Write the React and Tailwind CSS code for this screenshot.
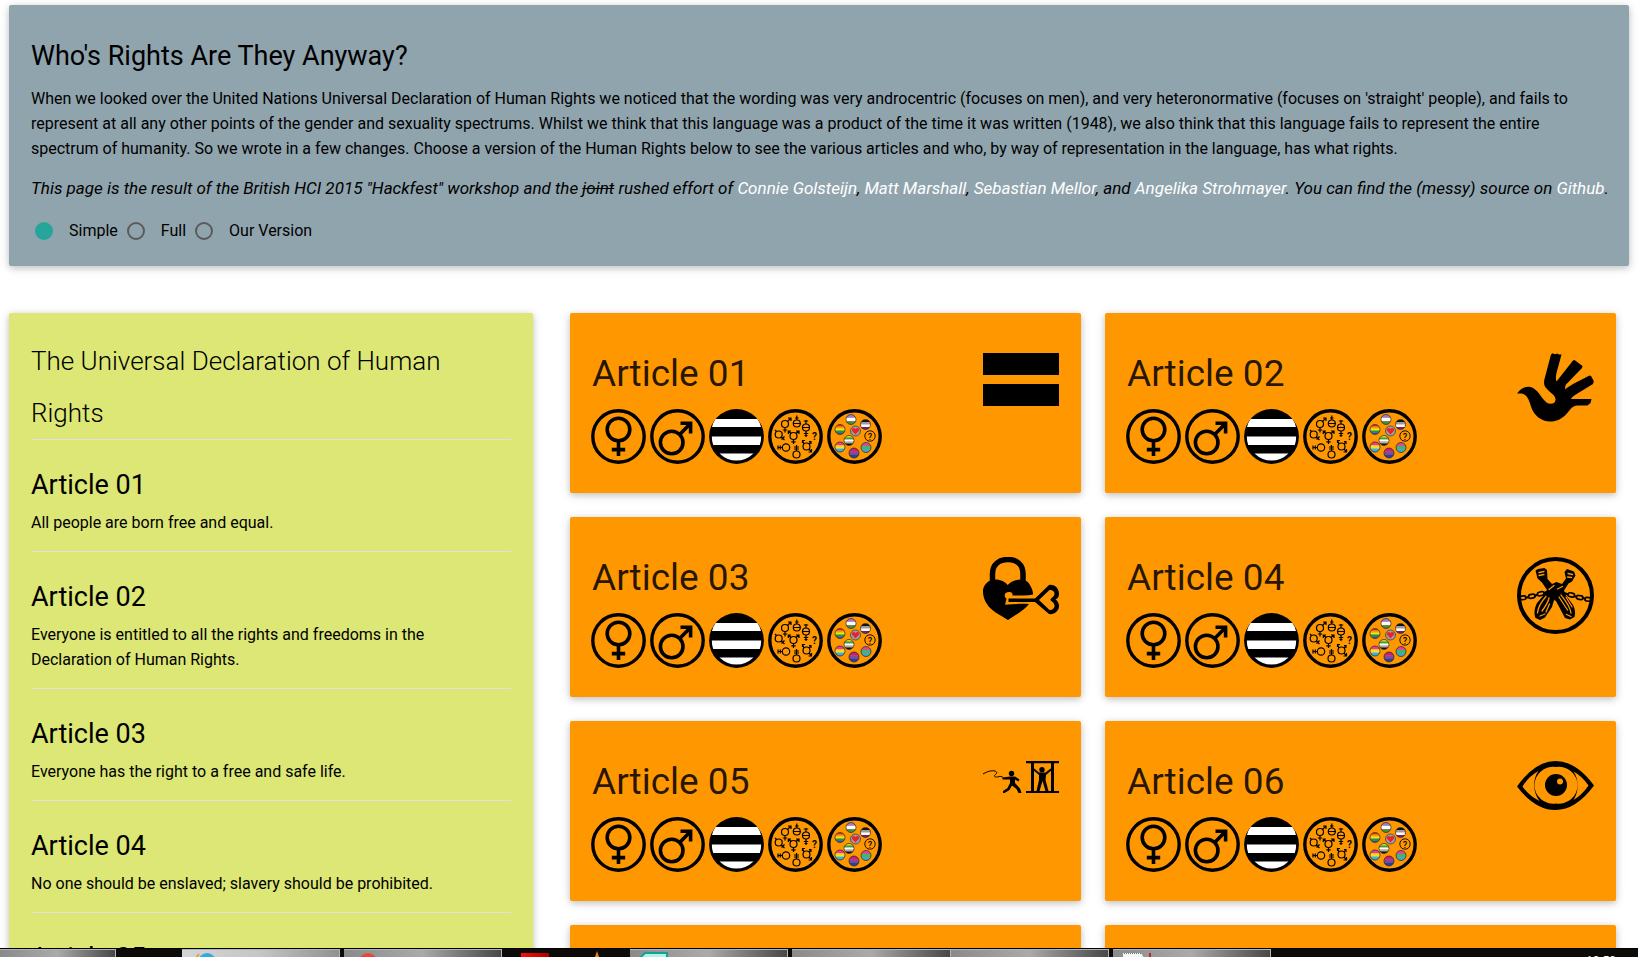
const articles = [
  { title: 'Article 01', text: 'All people are born free and equal.' },
  { title: 'Article 02', text: 'Everyone is entitled to all the rights and freedoms in the Declaration of Human Rights.' },
  { title: 'Article 03', text: 'Everyone has the right to a free and safe life.' },
  { title: 'Article 04', text: 'No one should be enslaved; slavery should be prohibited.' },
  { title: 'Article 05' },
];

const SHADOW = 'shadow-[0_2px_6px_0_rgba(0,0,0,0.16),0_2px_11px_0_rgba(0,0,0,0.12)]';

/* ---------- badges ---------- */

function Ring() {
  return <circle cx="27.5" cy="27.5" r="25.7" fill="none" stroke="#000" strokeWidth="3.4" />;
}

function Badge({ label, children }) {
  return (
    <svg role="img" aria-label={label} viewBox="0 0 55 55" className="size-[55px] shrink-0">
      {children}
    </svg>
  );
}

function Female() {
  return (
    <Badge label="Female">
      <Ring />
      <g fill="none" stroke="#000" strokeWidth="3.6">
        <circle cx="27.5" cy="20.5" r="11.3" />
        <path d="M27.5 32V47M20.8 40.6H34.2" />
      </g>
    </Badge>
  );
}

function Male() {
  return (
    <Badge label="Male">
      <Ring />
      <g fill="none" stroke="#000" strokeWidth="3.6">
        <circle cx="21.7" cy="33.5" r="11.3" />
        <path d="M29.7 25.5L40 15M30.5 14.2H40.6V24.5" />
      </g>
    </Badge>
  );
}

function Straight() {
  return (
    <Badge label="Straight">
      <circle cx="27.5" cy="27.5" r="27.4" fill="#000" />
      <path
        fill="#fff"
        d="M6.6 10H48.4Q51 13.5 52 18H3Q4 13.5 6.6 10ZM2.8 27.5H52.2Q52.200 32 50.800 36H4.200Q2.800 32 2.800 27.500ZM10.500 44.500H44.500Q37 51.600 27.500 51.600T10.500 44.500Z"
      />
    </Badge>
  );
}

function Genders() {
  return (
    <Badge label="Gender spectrum">
      <Ring />
      <g fill="none" stroke="#000" strokeWidth="1.2">
        <circle cx="17" cy="15" r="3.500" />
        <path d="M17 18.500V23.500M14.800 21H19.200M19.500 12.500L23 9M20 9H23V12" />
        <circle cx="28.800" cy="14.500" r="3.500" />
        <path d="M28.800 6.500V11M25 14.500H32.600M27 9H30.600" />
        <circle cx="38" cy="18.500" r="3.500" />
        <path d="M38 11V15M35.800 12H40.200M34.500 18.500H41.500M38 22V28M35.800 24.500H40.200M36.500 26.500H39.500" />
        <circle cx="10.700" cy="25.500" r="3.500" />
        <path d="M13.300 28L16.500 31M16.500 27.500L13.500 30.500M7 21L8.500 22.500" />
        <circle cx="25.500" cy="27" r="3.500" />
        <path d="M25.500 30.500V35M23.300 32.800H27.700M23 24.500L20.300 22M20.300 25V22H23M28 24.500L31 22M28 22H31V25" />
        <circle cx="18" cy="38.500" r="3.700" />
        <path d="M14.300 38.500H10M12.300 36.500V40.500M10 36.500V40.500" />
        <circle cx="28.500" cy="45.500" r="3.500" />
        <path d="M28.500 42V36M26 38H31M26 40H31" />
        <circle cx="38.500" cy="37.500" r="3.500" />
        <path d="M36 35L34.500 31.500M34.500 34V31.500H37M41 35L43 32.500M41 32.500H43V35M41 40L43.500 43M43.500 40V43H40.500" />
      </g>
      <text x="46.500" y="31" textAnchor="middle" className="font-[Roboto,sans-serif] text-[10px] font-bold">
        ?
      </text>
    </Badge>
  );
}

const flags = [
  { x: 24, y: 10.5, colors: ['#a77ac0', '#ffffff', '#4c8a3f'] },
  { x: 38.5, y: 15.5, colors: ['#111111', '#9c9c9c', '#ffffff', '#7d1880'] },
  { x: 13, y: 20.5, colors: ['#e22c1c', '#f59a12', '#f3e51d', '#1d9a3d', '#2f55b5'] },
  { x: 22, y: 31.5, colors: ['#e9dc29', '#35a24a', '#ffffff', '#aaaaaa', '#111111'] },
  { x: 13, y: 38, colors: ['#f4389a', '#f7df1f', '#2fb1f2'] },
  { x: 39, y: 38.5, colors: ['#e4429c', '#43b56c', '#3aa9d0'] },
  { x: 27, y: 44, colors: ['#d11b78', '#8a4797', '#2540a8'] },
];

function Sexualities() {
  return (
    <Badge label="Sexuality spectrum">
      <Ring />
      {flags.map((f, i) => {
        const h = 10 / f.colors.length;
        return (
          <g key={i}>
            <clipPath id={`flag-${i}`}>
              <circle cx={f.x} cy={f.y} r="5" />
            </clipPath>
            <g clipPath={`url(#flag-${i})`}>
              {f.colors.map((c, j) => (
                <rect key={j} x={f.x - 5} y={f.y - 5 + j * h} width="10" height={h + 0.2} fill={c} />
              ))}
            </g>
            <circle cx={f.x} cy={f.y} r="5" fill="none" stroke="#222" strokeWidth="0.7" />
          </g>
        );
      })}
      <circle cx="28.500" cy="22" r="5" fill="#9aa0a6" stroke="#333" strokeWidth="0.7" />
      <path d="M28.500 25.500L25 21.800Q24.500 19 26.800 19Q28 19 28.500 20.200Q29 19 30.300 19Q32.600 19 32 21.800Z" fill="#f0202a" />
      <circle cx="43" cy="27" r="5.200" fill="none" stroke="#000" strokeWidth="0.9" />
      <text x="43" y="30.500" textAnchor="middle" className="font-[Roboto,sans-serif] text-[9px] font-medium">
        ?
      </text>
    </Badge>
  );
}

/* ---------- article pictures ---------- */

function Picture({ label, viewBox, children }) {
  return (
    <svg role="img" aria-label={label} viewBox={viewBox} className="mt-[18px] w-[77px] shrink-0 self-start">
      {children}
    </svg>
  );
}

function Equal() {
  return (
    <Picture label="Equality" viewBox="0 0 77 53">
      <path d="M1 0H77V22H1ZM1 31H77V53H1Z" />
    </Picture>
  );
}

function Hand() {
  return (
    <Picture label="Hand" viewBox="0 0 77 69">
      <path d="M0 40.500C4 35 9 33 13.500 34C21 36 24 45 29.500 49.500C33 52 38 51 38.500 47C39 42 33 40 30 36C27 33 26.500 30 27.500 26L34 1.500L35.500 .3L38 1.200L40 .5L42 1.500L44.500 1.500L39.500 20C38.800 23 38.500 26 39.500 28.500L56 7.500L57.500 7L65.500 13L65 15L50.500 30C48 32 48 34 48.300 36.500C50 34.500 53 33 56 31L72.500 22.500L74 23L76.800 28L76 31L58 42C56 43.300 54.500 44.500 54 46H74.500L73.500 50L70.500 52.500H60C54 53 53 58 48 62.500C43 67 38 68.500 33.500 68.500C24 68.500 17 62 14.500 55C12 47 10.500 42 5 40.500Z" />
    </Picture>
  );
}

function Lock() {
  return (
    <Picture label="Lock and key" viewBox="-1 0 77 63">
      <path d="M9.500 25V17C9.500 7 16.500 2.500 24.800 2.500S40 7 40 17V25" fill="none" stroke="#000" strokeWidth="5.500" />
      <path d="M24.800 28C27 25 32 22.500 38 22.500C44 23 46 26 47.500 29C49 32 50 34 50 37.500Q46 38.500 40 38.500H29.500C30 36 28.500 34.800 26 35C22.500 35 21 37 22 40L23.500 42L22 47.800C30 47 38 46.500 46 47C42 53 32 58 25 63C16 57 8 54 4 47C.5 42 0 37 0 33.500C.5 28 5 23 11 22.500C17 22 22 24.500 24.800 28Z" />
      <path d="M25.500 41.500H52L66 28C70 27 76 30 76 37Q76 41 72.500 42.500Q76 45 76 49C76 54 71 58 66 57L52 45H25.500ZM56 43L66.500 53C69 53.500 72 51 71.500 48.500C71.500 45 67 44 67.500 42.500C67.500 41 71.500 40 71.500 36.500C71.500 34 68.500 32.500 66.500 33Z" fillRule="evenodd" />
    </Picture>
  );
}

function Chained() {
  return (
    <Picture label="Chained hands" viewBox="0 0 77 77">
      <circle cx="38.500" cy="38.500" r="36.500" fill="none" stroke="#000" strokeWidth="4" />
      <g fill="none" stroke="#000" strokeWidth="1.600">
        <rect x="3" y="39" width="6" height="3.600" rx="1.800" transform="rotate(-6 6 41)" />
        <rect x="11.500" y="37.500" width="6.500" height="3.800" rx="1.900" transform="rotate(-10 14 39)" />
        <rect x="20.500" y="35" width="6.500" height="3.800" rx="1.900" transform="rotate(-12 23 37)" />
        <rect x="51" y="36" width="6.500" height="3.800" rx="1.900" transform="rotate(12 54 38)" />
        <rect x="59.500" y="38.500" width="6.500" height="3.800" rx="1.900" transform="rotate(10 62 40)" />
        <rect x="68" y="40.500" width="6" height="3.600" rx="1.800" transform="rotate(6 71 42)" />
        <path d="M8 41L12 40M17.500 39L21 37.500M26.500 36L31 34.500M47 36L51.500 37.500M57 39L60 40M65.500 41L69 42" strokeWidth="2.200" />
      </g>
      <path d="M18.500 13.500L21 12L27.500 11L30 13L30.500 22L35 27L39.500 25L45 27L49 21.500L47.500 15L50 12L57 14.500L58.500 18.500L55 24.500L51.500 26.500L47 33.500L49.500 39L56 48C58.500 53 58.500 57 57.500 60L53 62.500L48 61L39 44L37 43L35 50L28 60.500L23 63L18.500 61C17 57 17 52 20 46L26.500 38.500L30 33L25 25.500L20.500 21.500Z" />
      <g fill="none" stroke="#ff9800" strokeWidth="1.300" strokeLinecap="round">
        <path d="M20.500 56C21 50 24 45 29 39.500M23 59L28 57M25 54C28 50 31 46 32 41M32.500 47L29 55M54 56C53 49 48 43 44 38M54 59.500L49.500 57.500M50.500 53L42 40M55 50L49 40M22 15.500L27 14.500M22 18.500L27 17.500M51 16.500L55.500 17.500M50.500 20L54.500 20.500M32 32.500L37 28.500M45.500 29.500L40.500 32" />
      </g>
    </Picture>
  );
}

function Torture() {
  return (
    <Picture label="Torture" viewBox="-1 0 77 32">
      <path d="M0 13C5 10 11 8.500 13.500 11C15 13 9 14.500 12.500 16C15 16.500 17 14 20 16.500" fill="none" stroke="#000" strokeWidth="1" />
      <circle cx="28.500" cy="12.500" r="2.700" />
      <path d="M27 15.500L32 15.500L36.500 18.500L35.500 20.500L32 18.500L32 22L37 27.500L38.500 32H35.500L33.500 28L29 24.500L26.500 29L21.500 32H20L20 30L24.500 27L27 22V18.500L19.500 18.500V16.500Z" />
      <path d="M43 0H76V2.200H43ZM43 30H76V32H43ZM48 2H51V30H48ZM68 2H71V30H68Z" />
      <circle cx="59" cy="8.700" r="2.700" />
      <path d="M50 6.500L56 11.500H62.500L69 6.500L70 8L63 14L62.500 19L65.500 30H62.500L59.500 20L56.500 30H53.500L56 19V14L49 8Z" />
    </Picture>
  );
}

function Eye() {
  return (
    <Picture label="Eye" viewBox="0 0 77 49">
      <path
        fillRule="evenodd"
        d="M0 25.500Q18 0 38.500 0T77 24.500Q59 49 38.500 49T0 25.500ZM5.500 25.500Q12 35 22.500 40C15.500 31 15.500 18 21.500 10Q12 15 5.500 25.500ZM71.500 24.500Q65 15 56.500 10.500C62 18 62 31 56.500 39Q65 34 71.500 24.500ZM39 6A18.500 18.500 0 1 0 39 42.500A18.500 18.500 0 1 0 39 6Z"
      />
      <circle cx="39" cy="24" r="11" />
      <circle cx="43" cy="20.500" r="3" fill="#ff9800" />
    </Picture>
  );
}

const cards = [
  { title: 'Article 01', Icon: Equal },
  { title: 'Article 02', Icon: Hand },
  { title: 'Article 03', Icon: Lock },
  { title: 'Article 04', Icon: Chained },
  { title: 'Article 05', Icon: Torture },
  { title: 'Article 06', Icon: Eye },
];

const CARD = `flex h-[180px] justify-between rounded-[2px] bg-[#ff9800] px-[22px] pt-[22px] ${SHADOW}`;

function Card({ title, Icon }) {
  return (
    <article className={CARD}>
      <div className="flex flex-col">
        <h2 className="mt-4 text-[37px] leading-[46px] text-black/85">{title}</h2>
        <div className="mt-3 -ml-px flex gap-1">
          <Female />
          <Male />
          <Straight />
          <Genders />
          <Sexualities />
        </div>
      </div>
      <Icon />
    </article>
  );
}

/* ---------- header ---------- */

function Radio({ label, checked }) {
  return (
    <label className="mr-[6px] flex items-center">
      <input
        type="radio"
        name="version"
        defaultChecked={checked}
        className="mr-4 ml-[3px] size-[18px] appearance-none rounded-full border-2 border-[#5a5a5a] checked:border-[#26a69a] checked:bg-[#26a69a]"
      />
      {label}
    </label>
  );
}

function Person({ children }) {
  return (
    <a href="#" className="text-white">
      {children}
    </a>
  );
}

function Header() {
  return (
    <header className={`rounded-[2px] bg-[#90a4ae] px-[22px] pt-[35px] pb-[23px] ${SHADOW}`}>
      <h1 className="text-[27px] leading-8">Who's Rights Are They Anyway?</h1>
      <p className="mt-[14px]">
        When we looked over the United Nations Universal Declaration of Human Rights we noticed that the wording was very
        androcentric (focuses on men), and very heteronormative (focuses on 'straight' people), and fails to represent at
        all any other points of the gender and sexuality spectrums. Whilst we think that this language was a product of
        the time it was written (1948), we also think that this language fails to represent the entire spectrum of
        humanity. So we wrote in a few changes. Choose a version of the Human Rights below to see the various articles
        and who, by way of representation in the language, has what rights.
      </p>
      <p className="mt-[15px] text-[17px] italic 2xl:whitespace-nowrap">
        This page is the result of the British HCI 2015 "Hackfest" workshop and the <s>joint</s> rushed effort of{' '}
        <Person>Connie Golsteijn</Person>, <Person>Matt Marshall</Person>, <Person>Sebastian Mellor</Person>, and{' '}
        <Person>Angelika Strohmayer</Person>. You can find the (messy) source on <Person>Github</Person>.
      </p>
      <form className="mt-[17px] ml-px flex">
        <Radio label="Simple" checked />
        <Radio label="Full" />
        <Radio label="Our Version" />
      </form>
    </header>
  );
}

/* ---------- taskbar ---------- */

function Task({ className, children }) {
  return (
    <div
      className={`h-full shrink-0 border-t border-r border-[#b5b5b5] bg-linear-to-r from-[#8a8a8a] via-[#aaaaaa] to-[#484848] ${className}`}
    >
      {children}
    </div>
  );
}

function Taskbar() {
  return (
    <footer className="flex h-[9px] shrink-0 overflow-hidden border-t border-black bg-[#0d0b08]">
      <Task className="w-[116px]" />
      <Task className="ml-[66px] w-[158px] from-[#d5d5d5] via-[#c5c5c5] to-[#909090]">
        <svg viewBox="0 0 24 8" className="ml-3 h-2 w-6">
          <circle cx="13" cy="12" r="9" fill="#35a8e0" />
          <path d="M2 8L5 4" stroke="#e8a33a" strokeWidth="2" />
        </svg>
      </Task>
      <Task className="ml-1 w-[158px]">
        <svg viewBox="0 0 24 8" className="ml-3 h-2 w-6">
          <circle cx="12" cy="12" r="9" fill="#e2493b" />
        </svg>
      </Task>
      <div className="mt-1 ml-[19px] h-2 w-7 shrink-0 bg-linear-to-r from-[#ff0d0d] to-[#b00000]" />
      <svg viewBox="0 0 8 8" className="ml-11 h-2 w-2 shrink-0">
        <path d="M4 2L6 8H2Z" fill="#f58210" />
      </svg>
      <Task className="ml-[29px] w-[158px]">
        <svg viewBox="0 0 30 8" className="ml-2 h-2 w-[30px]">
          <path d="M2 8L7 3H29V8Z" fill="#b5efe6" stroke="#13a393" strokeWidth="2" />
        </svg>
      </Task>
      <Task className="ml-1 w-[159px]" />
      <Task className="w-[158px]" />
      <Task className="ml-1 w-[158px]">
        <svg viewBox="0 0 32 8" className="ml-2 h-2 w-8">
          <path d="M2 3H20L23 8H2Z" fill="#f4f6f8" />
          <path d="M3 3.500H20" stroke="#777" strokeDasharray="1 1" />
          <path d="M29 3V7" stroke="#b3262b" strokeWidth="2" />
        </svg>
      </Task>
      <time className="mt-1 mr-[22px] ml-auto text-xs leading-4 text-white">10:50</time>
    </footer>
  );
}

export default function App() {
  return (
    <div className="flex h-screen flex-col overflow-hidden bg-white font-[Roboto,sans-serif] text-[16px] leading-[25px] text-black">
      <div className="min-h-0 flex-1 overflow-hidden px-[9px] pt-[5px]">
        <Header />
        <main className="mt-[47px] grid grid-cols-[524fr_1046fr] items-start gap-[37px] pr-[13px]">
          <section className={`rounded-[2px] bg-[#dce775] px-[22px] pt-[22px] ${SHADOW}`}>
            <h2 className="border-b border-[#e0e0e0] text-[26px] leading-[52px] font-light">
              The Universal Declaration of Human Rights
            </h2>
            {articles.map((a) => (
              <article key={a.title} className="border-b border-[#e0e0e0] pt-[29px] pb-4">
                <h3 className="text-[27px] leading-8">{a.title}</h3>
                {a.text && <p className="mt-[9px] pr-3">{a.text}</p>}
              </article>
            ))}
          </section>
          <div className="grid grid-cols-2 gap-6">
            {cards.map((c) => (
              <Card key={c.title} {...c} />
            ))}
            <article className={CARD} />
            <article className={CARD} />
          </div>
        </main>
      </div>
      <Taskbar />
    </div>
  );
}
